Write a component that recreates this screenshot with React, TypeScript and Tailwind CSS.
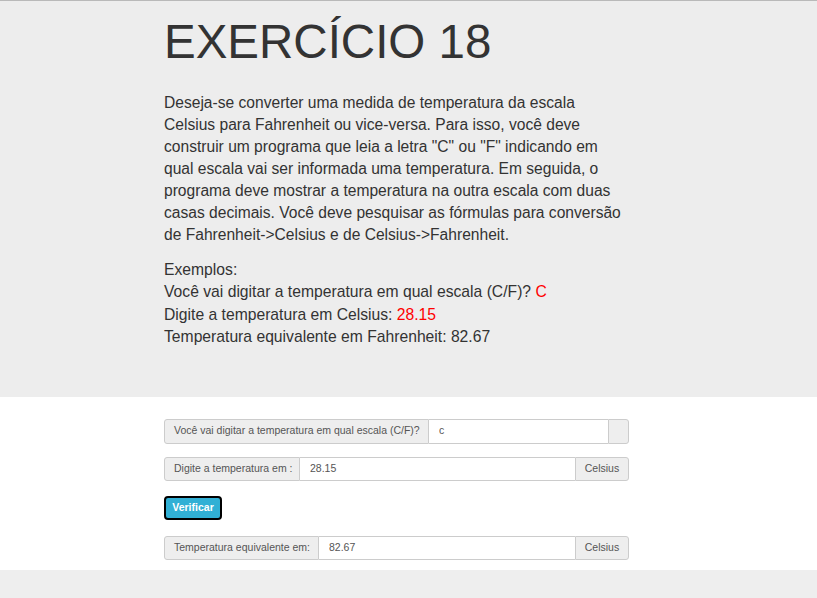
const font = { fontFamily: '"Liberation Sans", Arial, Helvetica, sans-serif' };

function InputGroup({
  label,
  value,
  addon,
  labelW,
  addonW,
  h = "h-[24px]",
}: {
  label: string;
  value: string;
  addon: string;
  labelW: string;
  addonW: string;
  h?: string;
}) {
  return (
    <div className={`flex ${h} w-full text-[10.5px] text-[#555]`}>
      <span
        className={`flex items-center ${labelW} shrink-0 rounded-l-[3px] border border-[#ccc] bg-[#eee] px-[9px] whitespace-nowrap`}
      >
        {label}
      </span>
      <input
        readOnly
        value={value}
        className="min-w-0 flex-1 border-y border-[#ccc] bg-white px-[10px] text-[10.5px] text-[#555] outline-none"
        style={font}
      />
      <span
        className={`flex items-center justify-center ${addonW} shrink-0 rounded-r-[3px] border border-[#ccc] bg-[#eee]`}
      >
        {addon}
      </span>
    </div>
  );
}

export default function App() {
  return (
    <div className="flex min-h-[598px] flex-col bg-[#eee]" style={font}>
      <div className="border-t border-[#b9b9b9] bg-[#ededed] pb-[48px] pl-[164px]">
        <div className="w-[465px] text-[#333]">
          <h1 className="mt-[13px] text-[47.5px] leading-[55px] font-normal">EXERCÍCIO 18</h1>
          <p className="mt-[23px] text-[15.6px] leading-[22px]">
            Deseja-se converter uma medida de temperatura da escala Celsius para Fahrenheit ou
            vice-versa. Para isso, você deve construir um programa que leia a letra "C" ou "F"
            indicando em qual escala vai ser informada uma temperatura. Em seguida, o programa deve
            mostrar a temperatura na outra escala com duas casas decimais. Você deve pesquisar as
            fórmulas para conversão de Fahrenheit-&gt;Celsius e de Celsius-&gt;Fahrenheit.
          </p>
          <p className="mt-[13px] text-[15.7px] leading-[22.4px]">
            Exemplos:
            <br />
            Você vai digitar a temperatura em qual escala (C/F)? <span className="text-[#f00]">C</span>
            <br />
            Digite a temperatura em Celsius: <span className="text-[#f00]">28.15</span>
            <br />
            Temperatura equivalente em Fahrenheit: 82.67
          </p>
        </div>
      </div>

      <div className="bg-white pt-[22px] pb-[10px] pl-[164px]">
        <div className="flex w-[465px] flex-col">
          <InputGroup
            label="Você vai digitar a temperatura em qual escala (C/F)?"
            value="c"
            addon=""
            labelW="w-[265px]"
            addonW="w-[21px]"
            h="h-[25px]"
          />
          <div className="mt-[13px]">
            <InputGroup
              label="Digite a temperatura em :"
              value="28.15"
              addon="Celsius"
              labelW="w-[136px]"
              addonW="w-[54px]"
            />
          </div>
          <div className="mt-[13px]">
            <button className="h-[24px] w-[58px] rounded-[4px] border-2 border-black bg-[#31b0d5] text-[10.5px] font-bold text-white">
              Verificar
            </button>
          </div>
          <div className="mt-[16px]">
            <InputGroup
              label="Temperatura equivalente em:"
              value="82.67"
              addon="Celsius"
              labelW="w-[155px]"
              addonW="w-[54px]"
            />
          </div>
        </div>
      </div>

      <div className="flex-1 bg-[#eee]" />
    </div>
  );
}
